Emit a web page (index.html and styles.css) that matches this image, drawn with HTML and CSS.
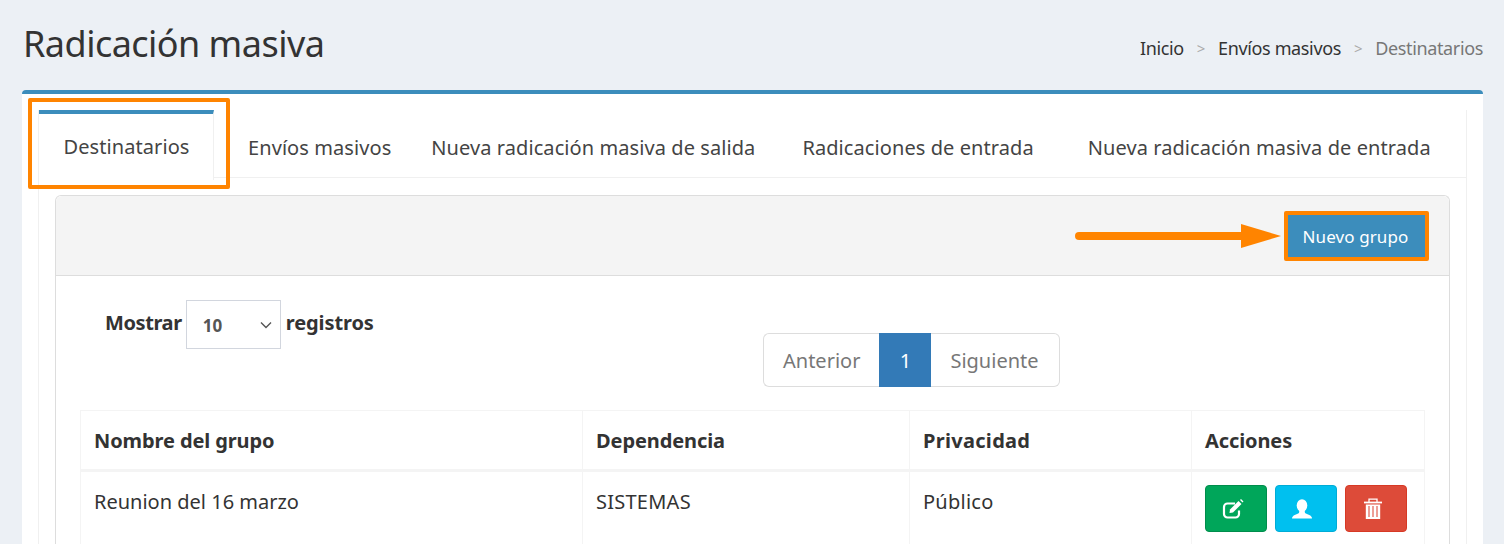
FILE: index.html
```html
<!DOCTYPE html>
<html lang="es">
<head>
<meta charset="utf-8">
<title>Radicación masiva</title>
<link rel="stylesheet" href="styles.css">
</head>
<body>
<header class="page-head">
  <h1 class="page-title">Radicación masiva</h1>
  <nav class="crumbs">
    <a class="crumb">Inicio</a><span class="crumb-sep">&gt;</span>
    <a class="crumb">Envíos masivos</a><span class="crumb-sep">&gt;</span>
    <span class="crumb crumb-current">Destinatarios</span>
  </nav>
</header>
<main class="box">
  <div class="tabs-wrap">
    <ul class="tabs">
      <li class="tab tab-active">Destinatarios<span class="tab-mark"></span></li>
      <li class="tab tab-2">Envíos masivos</li>
      <li class="tab tab-3">Nueva radicación masiva de salida</li>
      <li class="tab tab-4">Radicaciones de entrada</li>
      <li class="tab tab-5">Nueva radicación masiva de entrada</li>
    </ul>
    <section class="panel">
      <div class="panel-head">
        <svg class="arrow" width="210" height="30" viewBox="0 0 210 30"><path d="M6 15H170" stroke="#ff8400" stroke-width="8" stroke-linecap="round"/><path d="M168 3L208 15L168 27Z" fill="#ff8400"/></svg>
        <button class="btn-new">Nuevo grupo</button>
      </div>
      <div class="panel-body">
        <div class="controls">
          <div class="length">
            <span>Mostrar</span>
            <div class="select"><span class="select-value">10</span><svg width="12" height="8" viewBox="0 0 12 8"><path d="M1 1.500L6 6.500L11 1.500" fill="none" stroke="#555" stroke-width="1.400"/></svg></div>
            <span class="length-end">registros</span>
          </div>
          <div class="pager">
            <a class="page">Anterior</a><a class="page page-on">1</a><a class="page">Siguiente</a>
          </div>
        </div>
        <table class="grid">
          <thead>
            <tr><th class="c1">Nombre del grupo</th><th class="c2">Dependencia</th><th class="c3">Privacidad</th><th class="c4">Acciones</th></tr>
          </thead>
          <tbody>
            <tr>
              <td>Reunion del 16 marzo</td><td class="wide">SISTEMAS</td><td class="wide">Público</td>
              <td>
                <div class="actions">
                  <button class="act act-green"><svg class="icon-edit" width="22" height="20" viewBox="0 0 22 20"><path d="M17 11.500v3.500a3.500 3.500 0 0 1-3.500 3.500h-8A3.500 3.500 0 0 1 2 15V8a3.500 3.500 0 0 1 3.500-3.500H13" fill="none" stroke="#fff" stroke-width="2.200"/><path d="M8 10.500L16.500 2l3 3L11 13.500l-3.500.5z" fill="#fff"/><path d="M18 1l1-1 2.500 2.500-1 1z" fill="#fff"/></svg></button>
                  <button class="act act-blue"><svg class="icon-user" width="20" height="20" viewBox="0 0 20 20"><ellipse cx="10" cy="6.500" rx="5.300" ry="6.300" fill="#fff"/><path d="M0 19.500c0-3.500 5-4 7-5.500l.5-3h5l.5 3c2 1.500 7 2 7 5.500z" fill="#fff"/></svg></button>
                  <button class="act act-red"><svg class="icon-trash" width="18" height="21" viewBox="0 0 18 21"><path d="M0 4.500h18" stroke="#fff" stroke-width="1.800"/><path d="M5 4V1.200h8V4" fill="none" stroke="#fff" stroke-width="1.300"/><path d="M1.800 6.500h14.400V21H1.800z" fill="#fff"/><path d="M5 8v11M9 8v11M13 8v11" stroke="#dd4b39" stroke-width="1.400" opacity=".75"/></svg></button>
                </div>
              </td>
            </tr>
          </tbody>
        </table>
      </div>
    </section>
  </div>
</main>
</body>
</html>
```
FILE: styles.css
```css
* { box-sizing: border-box; }
html, body { margin: 0; height: 100%; overflow: hidden; }
body {
  background: #ecf0f5;
  color: #333;
  font-family: "Noto Sans", "Liberation Sans", sans-serif;
  font-size: 20px;
}
.page-head {
  height: 90px;
  padding: 20px 21px 0 23px;
  display: flex;
  justify-content: space-between;
  align-items: flex-start;
}
.page-title {
  margin: 0;
  font-size: 36px;
  font-weight: 400;
  line-height: 48px;
  letter-spacing: -0.53px;
}
.crumbs {
  display: flex;
  align-items: center;
  margin-top: 15px;
  font-size: 18px;
  letter-spacing: -0.36px;
  line-height: 26px;
}
.crumb-sep { color: #aaa; margin: 0 13px; font-size: 15px; }
.crumb-current { color: #777; }
.box {
  margin: 0 21px 0 22px;
  background: #fff;
  border-top: 4px solid #3c8dbc;
  border-radius: 4px 4px 0 0;
  padding: 16px 16px 0 16px;
  height: 460px;
}
.tabs-wrap {
  border-left: 1px solid #f0f0f0;
  border-right: 1px solid #f0f0f0;
  height: 100%;
}
.tabs {
  list-style: none;
  margin: 0;
  padding: 0;
  display: flex;
  height: 68px;
  border-bottom: 1px solid #f0f0f0;
  font-size: 20px;
  letter-spacing: 0.08px;
  color: #444;
}
.tab {
  height: 67px;
  display: flex;
  align-items: center;
  padding-top: 8px;
  white-space: nowrap;
}
.tab-active {
  position: relative;
  width: 175px;
  height: 70px;
  justify-content: center;
  background: #fff;
  border-top: 4px solid #3c8dbc;
  border-right: 1px solid #f0f0f0;
  padding: 0 0 2px 1px;
}
.tab-mark {
  position: absolute;
  left: -11px;
  top: -16px;
  width: 202px;
  height: 91px;
  border: 4px solid #ff8400;
  border-radius: 2px;
}
.tab-2 { margin-left: 34px; }
.tab-3 { margin-left: 40px; }
.tab-4 { margin-left: 47px; }
.tab-5 { margin-left: 54px; }
.panel {
  margin: 17px 16px 0 16px;
  border: 1px solid #ddd;
  border-bottom: 0;
  border-radius: 6px 6px 0 0;
}
.panel-head {
  position: relative;
  height: 80px;
  background: #f4f4f4;
  border-bottom: 1px solid #ddd;
  border-radius: 6px 6px 0 0;
  display: flex;
  justify-content: flex-end;
  align-items: flex-start;
  padding: 15px 20px 0 0;
}
.arrow { position: absolute; left: 1017px; top: 25px; }
.btn-new {
  width: 145px;
  height: 50px;
  background: #3c8dbc;
  color: #fff;
  font: inherit;
  font-size: 17px;
  letter-spacing: 0.1px;
  border: 4px solid #ff8400;
  border-radius: 2px;
  padding: 0 2px 0 0;
}
.panel-body { padding: 24px 24px 0; }
.controls {
  position: relative;
  height: 110px;
}
.length {
  display: flex;
  align-items: flex-start;
  padding-left: 25px;
  gap: 4px;
  font-size: 20px;
  font-weight: 700;
  letter-spacing: -0.4px;
  color: #333;
  line-height: 46px;
}
.length-end { letter-spacing: -0.1px; margin-left: 1px; }
.select {
  width: 95px;
  height: 49px;
  border: 1px solid #d2d6de;
  display: flex;
  align-items: center;
  justify-content: space-between;
  padding: 0 8px 0 16px;
  font-size: 17px;
  color: #555;
  font-weight: 700;
  letter-spacing: 0;
}
.select-value { line-height: 49px; padding-top: 1px; }
.pager {
  position: absolute;
  left: 683px;
  top: 33px;
  display: flex;
  height: 54px;
  font-size: 20px;
}
.page {
  display: flex;
  align-items: center;
  padding: 0 20px;
  color: #777;
  background: #fff;
  border: 1px solid #ddd;
}
.page:first-child { border-radius: 6px 0 0 6px; border-right: 0; padding: 0 19px; }
.page:last-child { border-radius: 0 6px 6px 0; border-left: 0; padding: 0 20px 0 19px; }
.page-on { background: #337ab7; border-color: #337ab7; color: #fff; width: 52px; justify-content: center; padding: 0; }
.grid {
  width: 1344px;
  border-collapse: collapse;
  table-layout: fixed;
}
.grid th, .grid td {
  border: 1px solid #f4f4f4;
  text-align: left;
  padding: 0 13px;
  vertical-align: top;
}
.grid th {
  height: 60px;
  padding-top: 1px;
  border-bottom: 3px solid #f4f4f4;
  vertical-align: middle;
  font-weight: 700;
  letter-spacing: -0.1px;
  color: #333;
}
.grid td { padding-top: 13px; height: 100px; line-height: 34px; color: #333; }
.grid td.wide { letter-spacing: 0.25px; }
.c1 { width: 502px; }
.c2 { width: 327px; }
.grid th.c3 { width: 282px; letter-spacing: 0.3px; }
.c4 { width: 233px; }
.actions { display: flex; gap: 8px; }
.act {
  width: 62px;
  height: 47px;
  border: 1px solid transparent;
  border-radius: 4px;
  padding: 0;
  display: flex;
  align-items: center;
  justify-content: center;
}
.act-green { background: #00a65a; border-color: #008d4c; }
.act-blue { background: #00c0ef; border-color: #00acd6; }
.act-red { background: #dd4b39; border-color: #d73925; }
.icon-edit { margin-right: 7px; }
.icon-user { margin-right: 8px; }
.icon-trash { margin-right: 6px; }
```
